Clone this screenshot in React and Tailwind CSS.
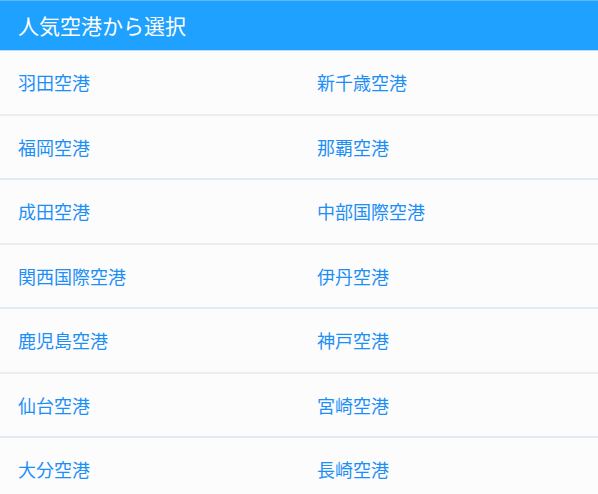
const airports = [
  ['羽田空港', '新千歳空港'],
  ['福岡空港', '那覇空港'],
  ['成田空港', '中部国際空港'],
  ['関西国際空港', '伊丹空港'],
  ['鹿児島空港', '神戸空港'],
  ['仙台空港', '宮崎空港'],
  ['大分空港', '長崎空港'],
]

const font = { fontFamily: '"Noto Sans CJK JP", "Noto Sans", sans-serif' }

export default function App() {
  return (
    <div className="w-[598px] h-[494px] bg-[#fcfcfd] overflow-hidden" style={font}>
      {/* Header */}
      <div className="h-[51px] bg-[#1ea1ff] border-t border-t-[#5cb9fb] border-b border-b-[#b9ddf8] flex items-center px-[18px]">
        <h2 className="text-[21px] text-white leading-none">人気空港から選択</h2>
      </div>

      {/* Airport list */}
      <div>
        {airports.map((pair, i) => (
          <div
            key={i}
            className={`grid grid-cols-2 h-[64.5px] border-b-2 ${
              i % 2 === 0 ? 'border-b-[#ededee]' : 'border-b-[#e2ebf4]'
            }`}
          >
            {pair.map((name) => (
              <a
                key={name}
                href="#"
                className="flex items-center px-[18px] text-[18px] text-[#1c8ff7] leading-none"
              >
                {name}
              </a>
            ))}
          </div>
        ))}
      </div>
    </div>
  )
}
